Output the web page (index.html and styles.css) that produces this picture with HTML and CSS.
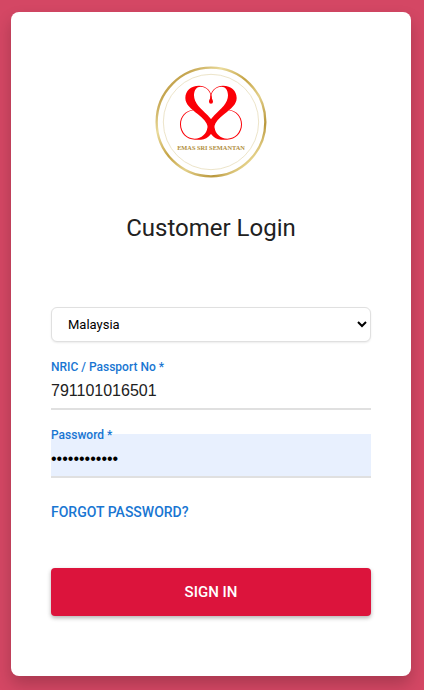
FILE: index.html
```html
<!DOCTYPE html>
<html lang="en">
<head>
<meta charset="utf-8">
<meta name="viewport" content="width=device-width, initial-scale=1">
<title>Customer Login</title>
<link rel="stylesheet" href="styles.css">
</head>
<body>
<main class="card">
  <svg class="logo" viewBox="0 0 366 366" role="img" aria-label="Emas Sri Semantan">
    <defs>
      <linearGradient id="gold" x1="0" y1="0" x2="1" y2="1">
        <stop offset="0" stop-color="#c9a94c"/>
        <stop offset=".16" stop-color="#c5a550"/>
        <stop offset=".3" stop-color="#eadb9c"/>
        <stop offset=".46" stop-color="#c5a344"/>
        <stop offset=".6" stop-color="#e3d08a"/>
        <stop offset=".76" stop-color="#b9973c"/>
        <stop offset=".88" stop-color="#efdf9c"/>
        <stop offset="1" stop-color="#c2a045"/>
      </linearGradient>
      <path id="swash" d="M186 118C186 94 170 77 147 77C122 77 106 93 106 114C106 134 124 147 143 162C160 175 170 186 173 199C177 216 189 239 213 239L231 239C257 239 276 219 276 193C276 169 259 151 236 149L236 151C257 153 273 170 273 193C273 217 255 236 232 236C211 236 196 220 194 204C192 190 186 179 173 166C152 145 132 130 132 106C132 90 140 80 152 80C170 80 183 95 184 118Z"/>
    </defs>
    <circle cx="183" cy="186" r="163" fill="none" stroke="url(#gold)" stroke-width="7"/>
    <circle cx="183" cy="186" r="143" fill="none" stroke="#e3d6ae" stroke-width="2"/>
    <g fill="#fb0007">
      <use href="#swash"/>
      <use href="#swash" transform="matrix(-1 0 0 1 366 0)"/>
      <path d="M183 103C184 117 189 119 189 125A6 6 0 0 1 177 125C177 119 182 117 183 103Z"/>
    </g>
    <text class="logo-text" x="183" y="269" text-anchor="middle">EMAS SRI SEMANTAN</text>
  </svg>
  <h1 class="title">Customer Login</h1>
  <form class="form">
    <select class="country" aria-label="Country">
      <option>Malaysia</option>
    </select>
    <div class="field">
      <label class="label" for="nric">NRIC / Passport No *</label>
      <input class="input" id="nric" type="text" value="791101016501">
    </div>
    <div class="field field-filled">
      <label class="label" for="password">Password *</label>
      <input class="input" id="password" type="password" value="abcdefghijkl">
    </div>
    <a class="forgot" href="#">FORGOT PASSWORD?</a>
    <button class="submit" type="button">SIGN IN</button>
  </form>
</main>
</body>
</html>
```
FILE: styles.css
```css
* {
  box-sizing: border-box;
}

body {
  margin: 0;
  padding: 12px 13px 14px 11px;
  background: #d44764;
  font-family: Roboto, "Liberation Sans", sans-serif;
  color: #212121;
}

.card {
  max-width: 400px;
  margin: 0 auto;
  padding: 48px 40px 60px;
  border-radius: 8px;
  background: #fff;
  box-shadow: 0 8px 16px rgba(0, 0, 0, .2);
}

.logo {
  display: block;
  width: 122px;
  height: 122px;
  margin: 0 auto;
}

.logo-text {
  fill: #b08d3c;
  font: bold 19px "Liberation Serif", serif;
}

.title {
  margin: 30px 0 63px;
  font-size: 24px;
  font-weight: 400;
  line-height: 32px;
  text-align: center;
}

.form {
  display: flex;
  flex-direction: column;
}

.country {
  height: 35px;
  padding: 0 0 0 12px;
  border: 1px solid #e0e0e0;
  border-radius: 6px;
  background: #fff;
  box-shadow: 0 1px 2px rgba(0, 0, 0, .08);
  color: #000;
  font: 13px Roboto, "Liberation Sans", sans-serif;
}

.field {
  display: flex;
  flex-direction: column;
  margin-top: 16px;
}

.label {
  position: relative;
  height: 8px;
  color: #1976d2;
  font-size: 12px;
  font-weight: 500;
  line-height: 18px;
}

.input {
  height: 44px;
  padding: 8px 0 0;
  border: 0;
  border-bottom: 2px solid #e0e0e0;
  outline: 0;
  background: transparent;
  color: #212121;
  font: 16px "Liberation Sans", sans-serif;
}

.field-filled .input {
  background: #e8f0fe;
  color: #000;
}

.forgot {
  align-self: flex-start;
  margin: 24px 0 46px;
  color: #1976d2;
  font-size: 14px;
  font-weight: 500;
  line-height: 20px;
  text-decoration: none;
}

.submit {
  height: 48px;
  border: 0;
  border-radius: 4px;
  background: #dc143c;
  box-shadow: 0 2px 4px rgba(0, 0, 0, .3);
  color: #fff;
  font: 500 15px Roboto, "Liberation Sans", sans-serif;
}
```
